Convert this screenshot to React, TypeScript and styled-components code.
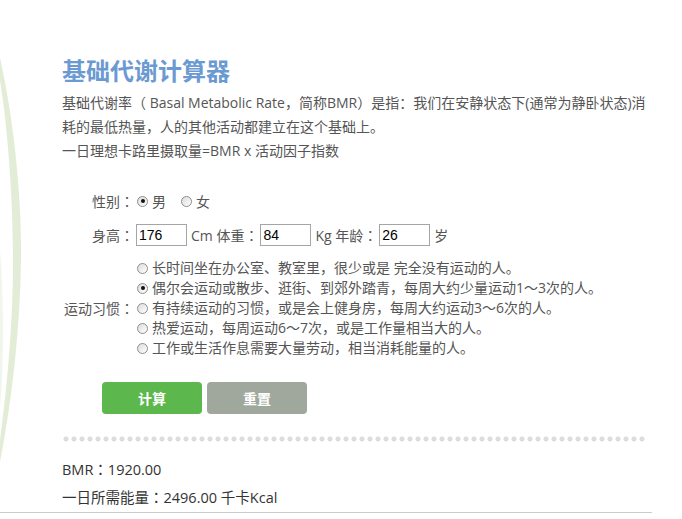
import React, { useState } from "react";
import styled, { createGlobalStyle } from "styled-components";

const GlobalStyle = createGlobalStyle`
  body {
    margin: 0;
    background: #ffffff;
    font-family: "Open Sans", "Noto Sans CJK SC", sans-serif;
  }
`;

const activities = [
  { text: "长时间坐在办公室、教室里，很少或是 完全没有运动的人。", factor: 1.2 },
  { text: "偶尔会运动或散步、逛街、到郊外踏青，每周大约少量运动1～3次的人。", factor: 1.3 },
  { text: "有持续运动的习惯，或是会上健身房，每周大约运动3～6次的人。", factor: 1.4 },
  { text: "热爱运动，每周运动6～7次，或是工作量相当大的人。", factor: 1.6 },
  { text: "工作或生活作息需要大量劳动，相当消耗能量的人。", factor: 1.9 }
];

const calcBmr = (sex: string, h: number, w: number, a: number) =>
  sex === "male"
    ? 66 + 13.7 * w + 5 * h - 6.8 * a
    : 655 + 9.6 * w + 1.8 * h - 4.7 * a;

const App: React.FC = () => {
  const [sex, setSex] = useState("male");
  const [height, setHeight] = useState("176");
  const [weight, setWeight] = useState("84");
  const [age, setAge] = useState("26");
  const [activity, setActivity] = useState(1);
  const [result, setResult] = useState<{ bmr: number; need: number } | null>({
    bmr: 1920,
    need: 2496
  });

  const calculate = () => {
    const bmr = calcBmr(sex, Number(height), Number(weight), Number(age));
    setResult({ bmr, need: bmr * activities[activity].factor });
  };

  const reset = () => {
    setSex("male");
    setHeight("");
    setWeight("");
    setAge("");
    setActivity(0);
    setResult(null);
  };

  return (
    <>
      <GlobalStyle />
      <Page>
        <Leaf viewBox="0 0 30 519" aria-hidden="true">
          <path
            d="M0 58 C 14 120, 22 200, 21 260 C 20 330, 12 400, 0 462 L 0 440 C 8 380, 13 320, 13 260 C 13 200, 8 130, 0 80 Z"
            fill="#e2ecd6"
          />
          <path d="M0 250 C 4 300, 4 360, 0 410 Z" fill="#f1f6ec" />
        </Leaf>
        <Panel>
          <Title>基础代谢计算器</Title>
          <Intro>
            基础代谢率（ Basal Metabolic Rate，简称BMR）是指：我们在安静状态下(通常为静卧状态)消耗的最低热量，人的其他活动都建立在这个基础上。
          </Intro>
          <Intro>一日理想卡路里摄取量=BMR x 活动因子指数</Intro>

          <Form>
            <Row>
              <Label>性别</Label>
              <Field>
                <Choice onClick={() => setSex("male")}>
                  <Radio $checked={sex === "male"} />男
                </Choice>
                <Choice onClick={() => setSex("female")}>
                  <Radio $checked={sex === "female"} />女
                </Choice>
              </Field>
            </Row>
            <Row>
              <Label>身高</Label>
              <Field>
                <NumberInput value={height} onChange={(e) => setHeight(e.target.value)} />
                <Unit>Cm 体重<Colon>：</Colon></Unit>
                <NumberInput value={weight} onChange={(e) => setWeight(e.target.value)} />
                <Unit>Kg 年龄<Colon>：</Colon></Unit>
                <NumberInput value={age} onChange={(e) => setAge(e.target.value)} />
                <Unit>岁</Unit>
              </Field>
            </Row>
            <ActivityRow>
              <Label>运动习惯</Label>
              <ActivityList>
                {activities.map((item, index) => (
                  <Option key={index} onClick={() => setActivity(index)}>
                    <Radio $checked={activity === index} />
                    {item.text}
                  </Option>
                ))}
              </ActivityList>
            </ActivityRow>
            <Buttons>
              <Button $tone="#5cb74c" onClick={calculate}>计算</Button>
              <Button $tone="#a0a89e" onClick={reset}>重置</Button>
            </Buttons>
          </Form>

          <Dots />

          <Results>
            <div>BMR<Colon>：</Colon>{result ? result.bmr.toFixed(2) : ""}</div>
            <div>
              一日所需能量<Colon>：</Colon>{result ? result.need.toFixed(2) : ""} 千卡Kcal
            </div>
          </Results>
        </Panel>
      </Page>
    </>
  );
};

const Page = styled.div`
  position: relative;
  width: 682px;
  min-height: 519px;
  overflow: hidden;
`;

const Leaf = styled.svg`
  position: absolute;
  left: 0;
  top: 0;
  width: 30px;
  height: 519px;
`;

const Panel = styled.div`
  position: relative;
  width: 590px;
  padding: 54px 0 0 62px;
  border-bottom: 1px solid #cccccc;
`;

const Title = styled.h1`
  margin: 0 0 5px;
  font-family: "Noto Sans CJK SC", sans-serif;
  font-size: 24px;
  line-height: 32px;
  font-weight: 700;
  color: #6b9ad3;
`;

const Intro = styled.p`
  margin: 0;
  width: 588px;
  font-size: 14px;
  line-height: 24px;
  color: #555555;
`;

/* centred full-width colon, as the Japanese cut of Noto draws it */
const Colon = styled.span`
  font-family: "Noto Sans CJK JP", sans-serif;
  line-height: 0;
`;

const Form = styled.div`
  display: flex;
  flex-direction: column;
  padding-top: 26px;
  font-size: 14px;
  color: #555555;
`;

const Row = styled.div`
  display: flex;
  align-items: center;
  min-height: 24px;
  margin-bottom: 10px;
`;

const ActivityRow = styled(Row)`
  margin-top: 1px;
  margin-bottom: 24px;
`;

const Label = styled.div`
  width: 72px;
  flex-shrink: 0;
  text-align: right;
  white-space: nowrap;

  &::after {
    content: "：";
    font-family: "Noto Sans CJK JP", sans-serif;
    line-height: 0;
  }
`;

const Field = styled.div`
  display: flex;
  align-items: center;
`;

const Choice = styled.label`
  display: flex;
  align-items: center;
  margin-right: 12px;
  cursor: pointer;
`;

const Radio = styled.span<{ $checked: boolean }>`
  position: relative;
  display: inline-block;
  width: 9px;
  height: 9px;
  margin: 0 4px 0 3px;
  border: 1px solid #8d8d8d;
  border-radius: 50%;
  background: linear-gradient(135deg, #dcdcdc, #ffffff);
  flex-shrink: 0;

  &::after {
    content: "";
    display: ${(p) => (p.$checked ? "block" : "none")};
    position: absolute;
    left: 2.5px;
    top: 2.5px;
    width: 4px;
    height: 4px;
    border-radius: 50%;
    background: #111111;
  }
`;

const NumberInput = styled.input`
  box-sizing: border-box;
  width: 51px;
  height: 22px;
  margin: 0 4px 0 2px;
  padding: 1px 2px;
  border: 1px solid #a5a5a5;
  font-family: "Liberation Sans", Arial, sans-serif;
  font-size: 14px;
  color: #000000;
  outline: none;
`;

const Unit = styled.span`
  white-space: nowrap;
`;

const ActivityList = styled.div`
  display: flex;
  flex-direction: column;
`;

const Option = styled.label`
  display: flex;
  align-items: center;
  line-height: 20px;
  white-space: nowrap;
  cursor: pointer;
`;

const Buttons = styled.div`
  display: flex;
  gap: 5px;
  padding-left: 40px;
`;

const Button = styled.button<{ $tone: string }>`
  width: 100px;
  height: 32px;
  border: 0;
  border-radius: 4px;
  background: ${(p) => p.$tone};
  color: #ffffff;
  font-family: "Noto Sans CJK SC", sans-serif;
  font-size: 14px;
  font-weight: 700;
  cursor: pointer;
`;

const Dots = styled.div`
  width: 584px;
  height: 8px;
  margin-top: 21px;
  background: radial-gradient(circle, #dddddd 2.3px, transparent 2.8px) 0 0 / 8px 8px repeat-x;
`;

const Results = styled.div`
  padding-top: 13px;
  font-size: 14.5px;
  line-height: 28px;
  color: #333333;
`;

export default App;
